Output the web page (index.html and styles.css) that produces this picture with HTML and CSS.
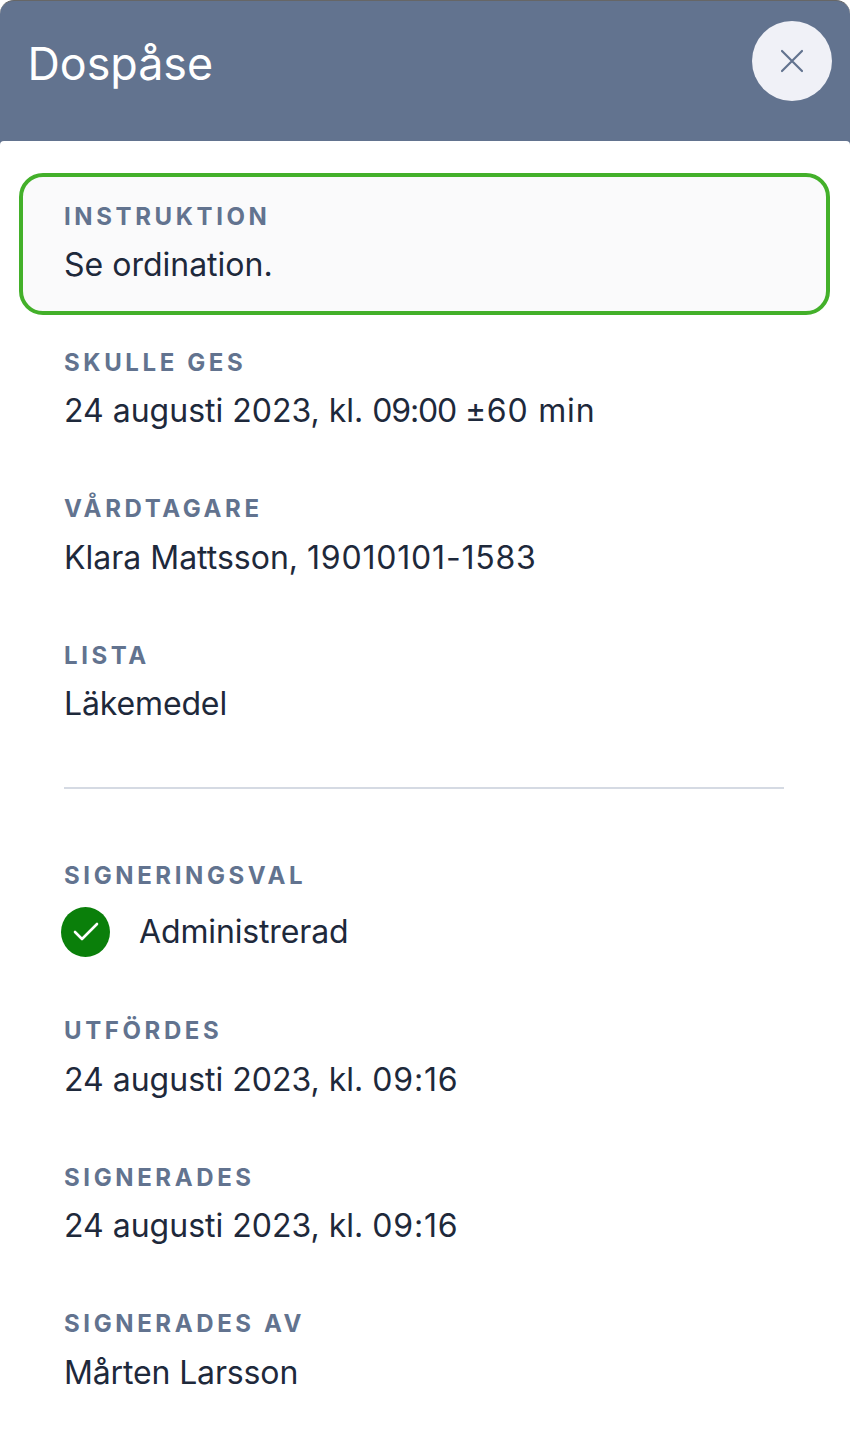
FILE: index.html
```html
<!DOCTYPE html>
<html lang="sv">
<head>
<meta charset="utf-8">
<title>Dospåse</title>
<link rel="stylesheet" href="styles.css">
</head>
<body>
<div class="sheet">
  <header class="head">
    <h1 class="title">Dospåse</h1>
    <button class="close" aria-label="Stäng">
      <svg width="24" height="24" viewBox="0 0 24 24" fill="none" stroke="#62738f" stroke-width="2.2" stroke-linecap="round"><path d="M2 2 22 22M22 2 2 22"/></svg>
    </button>
  </header>
  <main class="body">
    <section class="instruction">
      <div class="label">INSTRUKTION</div>
      <div class="value">Se ordination.</div>
    </section>
    <section class="field">
      <div class="label">SKULLE GES</div>
      <div class="value">24 augusti 2023, kl. <span class="narrow">09:00</span> <span class="wide">±60 min</span></div>
    </section>
    <section class="field">
      <div class="label">VÅRDTAGARE</div>
      <div class="value">Klara Mattsson, <span class="wide">19010101-1583</span></div>
    </section>
    <section class="field">
      <div class="label">LISTA</div>
      <div class="value name">Läkemedel</div>
    </section>
    <hr class="rule">
    <section class="field">
      <div class="label">SIGNERINGSVAL</div>
      <div class="status">
        <span class="badge">
          <svg width="26" height="20" viewBox="0 0 26 20" fill="none" stroke="#fff" stroke-width="2.6" stroke-linecap="round" stroke-linejoin="round"><path d="M2 10 9 17 24 2"/></svg>
        </span>
        <span class="value name">Administrerad</span>
      </div>
    </section>
    <section class="field">
      <div class="label">UTFÖRDES</div>
      <div class="value">24 augusti 2023, kl. <span class="wide">09:16</span></div>
    </section>
    <section class="field">
      <div class="label">SIGNERADES</div>
      <div class="value">24 augusti 2023, kl. <span class="wide">09:16</span></div>
    </section>
    <section class="field">
      <div class="label">SIGNERADES AV</div>
      <div class="value name">Mårten Larsson</div>
    </section>
  </main>
</div>
</body>
</html>
```
FILE: styles.css
```css
* { box-sizing: border-box; }
html, body { margin: 0; padding: 0; background: #fff; }
body { font-family: Inter, "Liberation Sans", sans-serif; color: #1e293b; }
.sheet { width: 850px; height: 1454px; overflow: hidden; border-radius: 14px 14px 0 0; background: #62738f; border-top: 1px solid #666; }
.head { height: 140px; display: flex; align-items: center; justify-content: space-between; padding: 0 18px 20px 27.5px; }
.title { margin: 5px 0 0; font-size: 44.8px; line-height: 56px; font-weight: 400; color: #fff; }
.close { width: 80px; height: 80px; border: 0; border-radius: 50%; background: #f0f1f7; display: flex; align-items: center; justify-content: center; padding: 0; }
.body { background: #fff; border-radius: 4px 4px 0 0; height: 1313px; padding: 32px 20px 0 19px; }
.instruction { padding: 24px 41px 22px; margin-bottom: 32px; border: 4px solid #43b02a; border-radius: 24px; background: #fafafb; }
.instruction .value { margin-top: 7.5px; }
.field { padding-left: 45px; }
.field + .field { margin-top: 58px; }
.label { font-size: 24px; line-height: 32px; font-weight: 700; letter-spacing: 3.6px; color: #62738f; }
.value { font-size: 32px; line-height: 48px; margin-top: 8.5px; color: #1e293b; }
.name { letter-spacing: -0.14px; }
.wide { letter-spacing: 0.8px; }
.narrow { letter-spacing: -1.2px; }
.rule { border: 0; border-top: 2px solid #d5dae3; margin: 59px 46px 71px 45px; }
.status { display: flex; align-items: center; margin-top: 15px; }
.badge { width: 49px; height: 50px; margin-left: -3px; margin-right: 29px; border-radius: 50%; background: #0a7f0a; display: flex; align-items: center; justify-content: center; }
.status .value { margin-top: 0; }
```
